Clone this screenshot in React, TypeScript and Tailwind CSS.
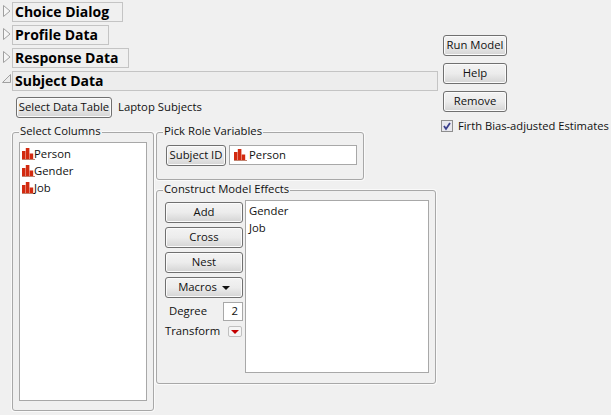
import React from 'react';

const font = "font-['Open_Sans','Liberation_Sans',sans-serif]";

const btn =
  'flex items-center justify-center whitespace-nowrap rounded-[3px] border border-[#707070] bg-gradient-to-b from-[#f3f3f3] via-[#ececec] to-[#d4d4d4] pb-[2px] text-[11.3px] leading-none text-[#111] shadow-[inset_0_0_0_1px_#fbfbfb]';

function Triangle({ open }: { open?: boolean }) {
  return (
    <svg width="9" height="16" viewBox="0 0 9 16" className="mt-[1px] shrink-0">
      {open ? (
        <path d="M0.5 10.5 H8.5 V2.5 Z" fill="#ececec" stroke="#a0a0a0" />
      ) : (
        <path d="M1.5 2.5 L8 8 L1.5 13.5 Z" fill="#f6f6f6" stroke="#a0a0a0" />
      )}
    </svg>
  );
}

function Outline({ title, width, open }: { title: string; width: string; open?: boolean }) {
  return (
    <div className="flex h-5 items-start gap-[1px] pl-[2px]">
      <Triangle open={open} />
      <div className={`flex h-5 items-center border border-[#c4c4c4] pb-[1px] pl-[2px] text-[14px] font-bold leading-none text-black ${width}`}>
        {title}
      </div>
    </div>
  );
}

function NominalIcon() {
  return (
    <svg width="13" height="12" viewBox="0 0 13 12" className="shrink-0">
      <path d="M0 3h3.4v8H0zM3.8 0h3.6v11H3.8zM7.8 5.5h3.4V11H7.8z" fill="#d22a10" />
      <path d="M0 11.5h13" stroke="#c2826f" />
    </svg>
  );
}

function ColumnRow({ name }: { name: string }) {
  return (
    <div className="flex h-[17px] items-center text-[11.3px] leading-none text-[#111]">
      <NominalIcon />
      <span className="-ml-[1px]">{name}</span>
    </div>
  );
}

function Group({ title, className, children }: { title: string; className: string; children: React.ReactNode }) {
  return (
    <div className={`relative rounded-[3px] border border-[#a8a8a8] shadow-[0_0_0_1px_#fafafa] ${className}`}>
      <span className="absolute left-[6px] top-[-9px] bg-[#f0f0f0] px-[1px] text-[11.3px] leading-[14px] text-[#111]">
        {title}
      </span>
      {children}
    </div>
  );
}

export default function App() {
  return (
    <div className={`flex h-[415px] w-[611px] overflow-hidden bg-[#f0f0f0] ${font}`}>
      <div className="w-[441px] shrink-0 pt-[2px]">
        <div className="flex flex-col gap-[3px]">
          <Outline title="Choice Dialog" width="w-[111px]" />
          <Outline title="Profile Data" width="w-[97px]" />
          <Outline title="Response Data" width="w-[117px]" />
          <Outline title="Subject Data" width="w-[426px] bg-[#ededed]" open />
        </div>

        <div className="ml-4 mt-[6px] flex items-center gap-[6px]">
          <button className={`${btn} h-[21px] w-[96px]`}>Select Data Table</button>
          <span className="pb-[1px] text-[11.3px] leading-none text-[#111]">Laptop Subjects</span>
        </div>

        <div className="ml-3 mt-[14px] flex gap-[2px]">
          <Group title="Select Columns" className="h-[279px] w-[142px] shrink-0 px-[6px] pb-[9px] pt-[9px]">
            <div className="h-full border border-[#a8a8a8] bg-white pl-[2px] pt-[2px]">
              <ColumnRow name="Person" />
              <ColumnRow name="Gender" />
              <ColumnRow name="Job" />
            </div>
          </Group>

          <div className="flex flex-col gap-[10px]">
            <Group title="Pick Role Variables" className="h-[48px] w-[208px] pl-[9px] pt-[12px]">
              <div className="flex items-start gap-[3px]">
                <button className={`${btn} h-[21px] w-[60px]`}>Subject ID</button>
                <div className="flex h-5 w-[128px] items-center gap-[2px] border border-[#a8a8a8] bg-white pb-[1px] pl-[4px] text-[11.3px] leading-none text-[#111]">
                  <NominalIcon />
                  <span>Person</span>
                </div>
              </div>
            </Group>

            <Group title="Construct Model Effects" className="h-[194px] w-[280px] pl-[8px] pt-[9px]">
              <div className="flex gap-[2px]">
                <div className="flex w-[78px] flex-col gap-[4px] pt-[2px]">
                  <button className={`${btn} h-[21px] w-[78px]`}>Add</button>
                  <button className={`${btn} h-[21px] w-[78px]`}>Cross</button>
                  <button className={`${btn} h-[21px] w-[78px]`}>Nest</button>
                  <button className={`${btn} h-[21px] w-[78px] gap-[5px]`}>
                    Macros
                    <svg width="8" height="4" viewBox="0 0 8 4" className="mt-[2px]">
                      <path d="M0 0h8L4 4z" fill="#111" />
                    </svg>
                  </button>
                  <div className="flex h-[19px] items-center justify-between pl-[4px] text-[11.3px] leading-none text-[#111]">
                    <span className="pb-[1px]">Degree</span>
                    <span className="flex h-[19px] w-5 items-center justify-end border border-[#a8a8a8] bg-white pb-[1px] pr-[4px]">2</span>
                  </div>
                  <div className="-mt-[2px] flex h-[17px] items-center justify-between text-[11.3px] leading-none text-[#111]">
                    <span className="pb-[1px]">Transform</span>
                    <span className="mr-[1px] flex h-[11px] w-[14px] items-center justify-center rounded-[2px] border border-[#c0c0c0] bg-[#f5f5f5]">
                      <svg width="8" height="4" viewBox="0 0 8 4">
                        <path d="M0 0h8L4 4z" fill="#c40000" />
                      </svg>
                    </span>
                  </div>
                </div>
                <div className="h-[173px] w-[184px] border border-[#a8a8a8] bg-white pl-[3px] pt-[2px] text-[11.3px] leading-[16.5px] text-[#111]">
                  <div>Gender</div>
                  <div>Job</div>
                </div>
              </div>
            </Group>
          </div>
        </div>
      </div>

      <div className="flex flex-col items-start pt-[35px]">
        <div className="ml-[2px] flex flex-col gap-[7px]">
          <button className={`${btn} h-[21px] w-16`}>Run Model</button>
          <button className={`${btn} h-[21px] w-16`}>Help</button>
          <button className={`${btn} h-[21px] w-16`}>Remove</button>
        </div>
        <label className="mt-[8px] flex items-center gap-[5px] text-[11.2px] leading-none text-[#111]">
          <span className="flex h-[12px] w-[12px] items-center justify-center border border-[#8e8e8e] bg-[#e8e8ee]">
            <svg width="10" height="10" viewBox="0 0 10 10">
              <path d="M2 5l2 3 4-6" fill="none" stroke="#3a3f8c" strokeWidth="1.8" />
            </svg>
          </span>
          <span className="whitespace-nowrap pb-[1px]">Firth Bias-adjusted Estimates</span>
        </label>
      </div>
    </div>
  );
}
